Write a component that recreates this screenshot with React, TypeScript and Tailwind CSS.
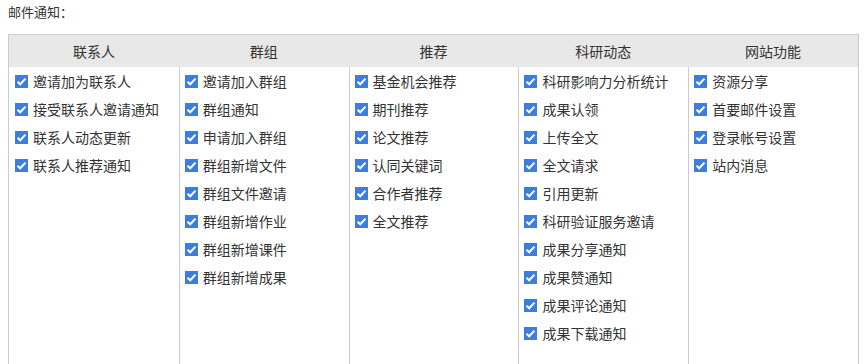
const columns = [
  {
    title: "联系人",
    items: ["邀请加为联系人", "接受联系人邀请通知", "联系人动态更新", "联系人推荐通知"],
  },
  {
    title: "群组",
    items: [
      "邀请加入群组",
      "群组通知",
      "申请加入群组",
      "群组新增文件",
      "群组文件邀请",
      "群组新增作业",
      "群组新增课件",
      "群组新增成果",
    ],
  },
  {
    title: "推荐",
    items: ["基金机会推荐", "期刊推荐", "论文推荐", "认同关键词", "合作者推荐", "全文推荐"],
  },
  {
    title: "科研动态",
    items: [
      "科研影响力分析统计",
      "成果认领",
      "上传全文",
      "全文请求",
      "引用更新",
      "科研验证服务邀请",
      "成果分享通知",
      "成果赞通知",
      "成果评论通知",
      "成果下载通知",
    ],
  },
  {
    title: "网站功能",
    items: ["资源分享", "首要邮件设置", "登录帐号设置", "站内消息"],
  },
];

const Check = () => (
  <span className="flex h-[13px] w-[13px] shrink-0 items-center justify-center bg-[#3b7de0]">
    <svg viewBox="0 0 13 13" className="h-[13px] w-[13px]">
      <path
        d="M2.5 6.8 L5.2 9.3 L10.5 3.6"
        fill="none"
        stroke="#fff"
        strokeWidth="2"
      />
    </svg>
  </span>
);

export default function App() {
  return (
    <div
      className="h-[364px] overflow-hidden bg-white text-[#333]"
      style={{ fontFamily: '"Noto Sans CJK SC", "Noto Sans", sans-serif' }}
    >
      <div className="px-[8px] pt-[2px] text-[13px] leading-[20px]">邮件通知：</div>
      <div className="mx-[8px] mt-[12px] w-[851px] border-x border-t border-[#cccccc]">
        <div className="grid grid-cols-5 bg-[#e8e8e8]">
          {columns.map((c) => (
            <div key={c.title} className="h-[32px] text-center text-[14px] leading-[32px]">
              {c.title}
            </div>
          ))}
        </div>
        <div className="grid min-h-[340px] grid-cols-5">
          {columns.map((c, i) => (
            <div
              key={c.title}
              className={`flex flex-col ${i > 0 ? "border-l border-[#cccccc]" : ""}`}
            >
              {c.items.map((it) => (
                <label
                  key={it}
                  className={`flex h-[28px] items-center gap-[5px] text-[14px] ${i > 0 ? "pl-[5px]" : "pl-[6px]"}`}
                >
                  <Check />
                  <span className="whitespace-nowrap">{it}</span>
                </label>
              ))}
            </div>
          ))}
        </div>
      </div>
    </div>
  );
}
